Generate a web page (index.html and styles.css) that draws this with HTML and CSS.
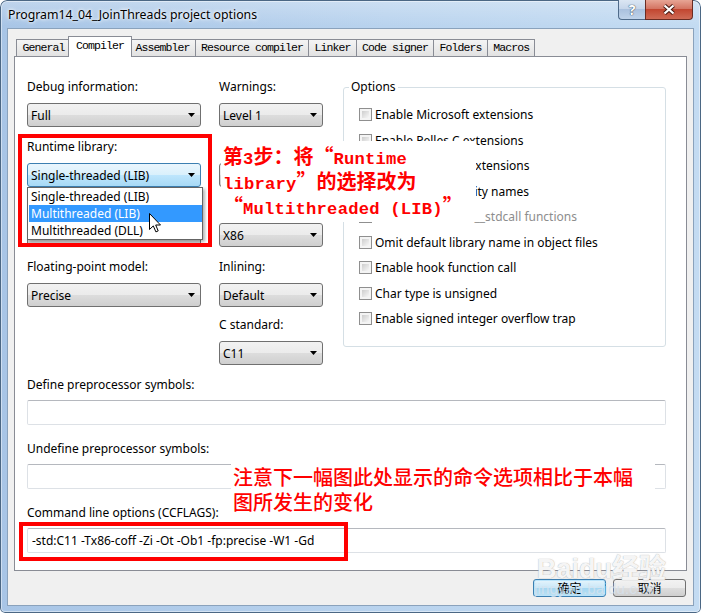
FILE: index.html
```html
<!DOCTYPE html>
<html>
<head>
<meta charset="utf-8">
<link rel="stylesheet" href="styles.css">
</head>
<body>
<div class="window">
  <div class="titlebar">
    <span class="title">Program14_04_JoinThreads project options</span>
    <div class="caption">
      <div class="cbtn help">?</div>
      <div class="cbtn close">
        <svg width="14" height="11" viewBox="0 0 14 11"><path d="M2.5 1.5L11.5 9.5M11.5 1.5L2.5 9.5" stroke="#4a1c14" stroke-width="4.2"/><path d="M2.5 1.5L11.5 9.5M11.5 1.5L2.5 9.5" stroke="#fff" stroke-width="2.2"/></svg>
      </div>
    </div>
  </div>
  <div class="client">
    <div class="tabs">
      <div class="tab">General</div>
      <div class="tab active">Compiler</div>
      <div class="tab">Assembler</div>
      <div class="tab">Resource compiler</div>
      <div class="tab">Linker</div>
      <div class="tab">Code signer</div>
      <div class="tab">Folders</div>
      <div class="tab">Macros</div>
    </div>
    <div class="panel">
      <div class="top">
        <div class="combos">
          <div class="cell"><div class="lbl">Debug information:</div><div class="combo">Full</div></div>
          <div class="cell"><div class="lbl">Warnings:</div><div class="combo">Level 1</div></div>
          <div class="cell"><div class="lbl">Runtime library:</div><div class="combo focus">Single-threaded (LIB)</div></div>
          <div class="cell"><div class="lbl"></div><div class="combo"></div></div>
          <div class="cell"><div class="lbl"></div><div class="combo"></div></div>
          <div class="cell"><div class="lbl"></div><div class="combo">X86</div></div>
          <div class="cell"><div class="lbl">Floating-point model:</div><div class="combo">Precise</div></div>
          <div class="cell"><div class="lbl">Inlining:</div><div class="combo">Default</div></div>
          <div class="cell"></div>
          <div class="cell shift"><div class="lbl">C standard:</div><div class="combo">C11</div></div>
        </div>
        <fieldset class="options">
          <legend>Options</legend>
          <div class="chklist">
            <div class="chk"><span class="box"></span>Enable Microsoft extensions</div>
            <div class="chk"><span class="box"></span>Enable Pelles C extensions</div>
            <div class="chk"><span class="box"></span>Enable compiler extensions</div>
            <div class="chk"><span class="box"></span>Define compatibility names</div>
            <div class="chk disabled"><span class="box"></span>Use undecorated __stdcall functions</div>
            <div class="chk"><span class="box"></span>Omit default library name in object files</div>
            <div class="chk"><span class="box"></span>Enable hook function call</div>
            <div class="chk"><span class="box"></span>Char type is unsigned</div>
            <div class="chk"><span class="box"></span>Enable signed integer overflow trap</div>
          </div>
        </fieldset>
      </div>
      <div class="field first"><div class="lbl">Define preprocessor symbols:</div><div class="input"></div></div>
      <div class="field"><div class="lbl">Undefine preprocessor symbols:</div><div class="input"></div></div>
      <div class="field"><div class="lbl">Command line options (CCFLAGS):</div><div class="input">-std:C11 -Tx86-coff -Zi -Ot -Ob1 -fp:precise -W1 -Gd</div></div>
    </div>
    <div class="buttons">
      <div class="btn default">确定</div>
      <div class="btn">取消</div>
    </div>
  </div>

  <div class="dropdown">
    <div class="item">Single-threaded (LIB)</div>
    <div class="item sel">Multithreaded (LIB)</div>
    <div class="item">Multithreaded (DLL)</div>
  </div>
  <svg class="cursor" width="13" height="21" viewBox="0 0 13 21"><path d="M0.5 0.5V16.5L4.3 12.9L6.9 18.9L9.2 17.9L6.7 12H11.5Z" fill="#fff" stroke="#000" stroke-width="1" stroke-linejoin="miter"/></svg>
  <div class="redbox rb1"></div>
  <div class="redbox rb2"></div>
  <div class="note note1">第<span class="lat">3</span>步：将<span class="q ql">“</span><span class="lat">Runtime</span><br><span class="lat">library</span><span class="q qr">”</span>的选择改为<br><span class="q ql">“</span><span class="lat">Multithreaded (LIB)</span><span class="q qr">”</span></div>
  <div class="note note2">注意下一幅图此处显示的命令选项相比于本幅<br>图所发生的变化</div>
  <div class="wm wm1">Baidu经验</div>
  <div class="wm wm2">jingyan.baidu.com</div>
</div>
</body>
</html>
```
FILE: styles.css
```css
* { box-sizing: border-box; }
html, body { margin: 0; padding: 0; }
body {
  width: 701px; height: 613px; overflow: hidden; background: #fff;
  font-family: "Noto Sans", "Open Sans", sans-serif; font-size: 12px; color: #000;
}
.window {
  position: relative; width: 701px; height: 613px;
  border-radius: 7px 7px 5px 5px;
  background:
    linear-gradient(to bottom, rgba(255,255,255,.28), rgba(255,255,255,0) 26px),
    linear-gradient(to right, #a8c5e6, #b9d3ee 55%, #c3dbf2);
  box-shadow: inset 0 0 0 1px #4b6784, inset 0 0 0 2px rgba(255,255,255,.45);
  display: flex; flex-direction: column; overflow: hidden;
}
.titlebar { height: 28px; display: flex; align-items: flex-start; padding-left: 8px; }
.title { margin-top: 6px; line-height: 18px; font-size: 12.3px; text-shadow: 0 0 5px #fff, 0 0 3px #fff; }
.caption { margin-left: auto; margin-right: 8px; display: flex; }
.cbtn { height: 20px; display: flex; align-items: center; justify-content: center; border: 1px solid #4f6b8a; border-top: none; }
.help {
  width: 27px; border-right: none; border-radius: 0 0 0 4px;
  background: linear-gradient(#dbe6f3, #c6d6ea 45%, #aac1de 50%, #bfd3ea);
  color: #fff; font-weight: bold; font-size: 14px; line-height: 1;
  text-shadow: 0 0 1px #2b3d52, 0 0 1px #2b3d52;
}
.close {
  width: 48px; border-radius: 0 0 4px 0; border-color: #6a2c22;
  background: linear-gradient(#e7a595, #d47563 45%, #c24731 50%, #cf6b56);
}
.client {
  flex: 1; margin: 0 7px 7px 7px; background: #f0f0f0;
  border: 1px solid #8aa2bc; padding: 0 6px;
  display: flex; flex-direction: column;
}
.tabs { display: flex; align-items: flex-end; height: 20px; margin-top: 7px; padding-left: 2px; }
.tab {
  font-family: "Liberation Mono", monospace; font-size: 11.5px; letter-spacing: -0.9px;
  height: 17px; line-height: 16px; padding: 0 5px 0 5.5px;
  border: 1px solid #898c95; border-bottom: none;
  background: linear-gradient(#f4f4f4, #e2e2e2);
  margin-left: -1px; white-space: nowrap;
}
.tab:first-child { margin-left: 0; }
.tab.active {
  position: relative; z-index: 1; height: 21px; line-height: 18px;
  margin: 0 -2px -1px -3px; padding: 0 7px 0 7.5px; background: #fff;
}
.panel {
  height: 515px; background: #fff; border: 1px solid #898c95;
  padding: 22px 20px 0 12px; display: flex; flex-direction: column;
}
.top { display: flex; align-items: flex-start; }
.combos { display: grid; grid-template-columns: 174px 104px; column-gap: 18px; row-gap: 12px; }
.cell.shift { margin-top: -2px; }
.lbl { line-height: 16px; height: 16px; margin-bottom: 8px; white-space: nowrap; }
.combo {
  height: 24px; border: 1px solid #707070; border-radius: 3px;
  background: linear-gradient(#f2f2f2 0%, #ebebeb 50%, #dddddd 50%, #cfcfcf 100%);
  display: flex; align-items: center; justify-content: space-between;
  padding: 0 5px 0 3px; white-space: nowrap;
}
.combo::after { content: ""; margin-left: auto; width: 7px; height: 4px; background: #000; clip-path: polygon(0 0, 100% 0, 50% 100%); }
.combo.focus { border-color: #3c7fb1; background: linear-gradient(#eaf6fd 0%, #d9f0fc 50%, #bee6fd 50%, #a7d9f5 100%); }
.options {
  flex: 1; margin: 0 0 0 20px; padding: 0; min-width: 0;
  border: 1px solid #d5dfe5; border-radius: 3px;
}
.options legend { padding: 0 2px; margin-left: 5px; line-height: 16px; }
.chklist { padding: 7px 0 14px 15px; }
.chk { display: flex; align-items: center; gap: 3px; height: 25.5px; white-space: nowrap; }
.chk.disabled { color: #8d8d8d; }
.box {
  width: 13px; height: 13px; flex: none; padding: 2px;
  border: 1px solid #8f8f8f;
  background: linear-gradient(135deg, #cdcdcd, #f7f7f7) content-box, #f4f4f4;
}
.field { margin-top: 16px; }
.field.first { margin-top: 12px; }
.field .lbl { margin-bottom: 7px; }
.input {
  height: 25px; border: 1px solid #dde1e6; border-top-color: #b5b8be; border-radius: 2px;
  padding: 0 4px; line-height: 23px; white-space: nowrap;
}
.buttons { display: flex; justify-content: flex-end; gap: 7px; margin-top: 8px; padding-right: 1px; }
.btn {
  width: 73px; height: 18px; border: 1px solid #707070; border-radius: 3px;
  background: linear-gradient(#f2f2f2, #ebebeb 50%, #dddddd 50%, #cfcfcf);
  font-family: "Noto Sans CJK SC", sans-serif; font-size: 12px; line-height: 1;
  display: flex; align-items: center; justify-content: center;
}
.btn.default {
  border-color: #3c7fb1;
  background: linear-gradient(#e5f4fc, #c8e7f8 50%, #a3d6f1 50%, #bde2f4);
  box-shadow: inset 0 0 0 1px #b9e3fa;
}
.dropdown {
  position: absolute; left: 27px; top: 187px; width: 176px; height: 53px;
  background: #fff; border: 1px solid #646464; padding-left: 1px;
  box-shadow: 2px 2px 3px rgba(0,0,0,.3); z-index: 3;
}
.item { height: 17px; line-height: 17px; padding-left: 2px; white-space: nowrap; }
.item.sel { background: #3399ff; color: #fff; }
.cursor { position: absolute; left: 149px; top: 213px; z-index: 5; }
.redbox { position: absolute; border: 4px solid #ff0000; z-index: 4; }
.rb1 { left: 18px; top: 134px; width: 194px; height: 113px; }
.rb2 { left: 19px; top: 522px; width: 329px; height: 39px; }
.note { position: absolute; background: #fff; color: #ff0000; z-index: 4; white-space: nowrap; }
.note1 {
  left: 221px; top: 141px; width: 255px; height: 81px; padding: 2px 0 0 2px;
  font-family: "Noto Sans CJK SC", sans-serif; font-weight: bold; font-size: 20px; line-height: 25px;
}
.note1 .lat { font-family: "Liberation Mono", monospace; font-size: 17.2px; letter-spacing: 0.2px; line-height: 1; }
.note1 .q { display: inline-block; width: 20px; line-height: 1; }
.note1 .ql { text-align: right; }
.note1 .qr { text-align: left; }
.note2 {
  left: 231px; top: 464px; width: 424px; height: 48px; padding: 0 0 0 2px;
  font-family: "Noto Sans CJK SC", sans-serif; font-weight: 500; font-size: 20px; line-height: 25px; letter-spacing: 0;
}
.wm { position: absolute; z-index: 6; white-space: nowrap; pointer-events: none; }
.wm1 {
  left: 537px; top: 547px; font-family: "Liberation Sans", "Noto Sans CJK SC", sans-serif;
  font-size: 27px; font-weight: bold; color: rgba(255,255,255,.9);
  text-shadow: 0 0 1px rgba(170,170,170,.7), 0 0 1px rgba(170,170,170,.7);
}
.wm2 {
  left: 534px; top: 580px; font-family: "Liberation Sans", sans-serif; font-size: 15px;
  color: rgba(214,226,238,.8); letter-spacing: 0.2px;
}
```
